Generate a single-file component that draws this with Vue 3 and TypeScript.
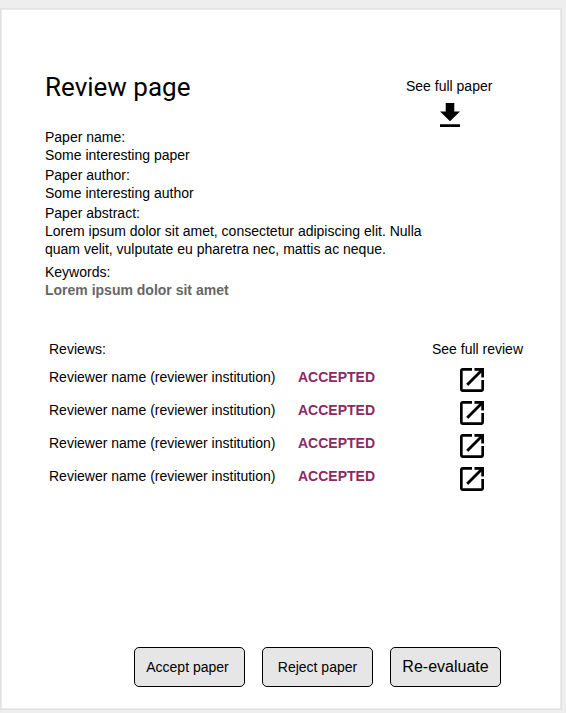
<script setup lang="ts">
interface Field {
  label: string
  value: string
  kind?: string
}

interface Review {
  id: number
  reviewer: string
  verdict: string
}

const fields: Field[] = [
  { label: 'Paper name:', value: 'Some interesting paper' },
  { label: 'Paper author:', value: 'Some interesting author' },
  {
    label: 'Paper abstract:',
    value:
      'Lorem ipsum dolor sit amet, consectetur adipiscing elit. Nulla quam velit, vulputate eu pharetra nec, mattis ac neque.',
  },
  { label: 'Keywords:', value: 'Lorem ipsum dolor sit amet', kind: 'keywords' },
]

const reviews: Review[] = [1, 2, 3, 4].map((id) => ({
  id,
  reviewer: 'Reviewer name (reviewer institution)',
  verdict: 'ACCEPTED',
}))
</script>

<template>
  <div class="page">
    <main class="card">
      <header class="top">
        <h1>Review page</h1>
        <div class="download">
          <span>See full paper</span>
          <svg width="20" height="24" viewBox="5 3 14 17" preserveAspectRatio="none" aria-hidden="true">
            <path d="M19 9h-4V3H9v6H5l7 7 7-7zM5 18v2h14v-2H5z" />
          </svg>
        </div>
      </header>

      <dl class="fields">
        <div v-for="field in fields" :key="field.label" class="field" :class="field.kind">
          <dt>{{ field.label }}</dt>
          <dd>{{ field.value }}</dd>
        </div>
      </dl>

      <section class="reviews">
        <div class="reviews-head">
          <span>Reviews:</span>
          <span class="see-review">See full review</span>
        </div>
        <div v-for="review in reviews" :key="review.id" class="review">
          <span>{{ review.reviewer }}</span>
          <strong>{{ review.verdict }}</strong>
          <svg class="open" width="24" height="24" viewBox="3 3 18 18" aria-hidden="true">
            <path d="M19 19H5V5h7V3H5c-1.11 0-2 .9-2 2v14c0 1.1.89 2 2 2h14c1.1 0 2-.9 2-2v-7h-2v7z" />
            <path class="arrow" d="M14 3v2h3.59l-9.83 9.83 1.41 1.41L19 6.41V10h2V3h-7z" />
          </svg>
        </div>
      </section>

      <footer class="actions">
        <button type="button">Accept paper</button>
        <button type="button">Reject paper</button>
        <button type="button" class="large">Re-evaluate</button>
      </footer>
    </main>
  </div>
</template>

<style>
body {
  background: #eeeeee;
}
</style>

<style scoped>
.page {
  box-sizing: border-box;
  height: 713px;
  padding: 9px 5px 4px 1px;
  font: 14px/18px 'Liberation Sans', Arial, sans-serif;
  color: #000;
}

.card {
  box-sizing: border-box;
  display: flex;
  flex-direction: column;
  height: 700px;
  padding: 0 0 21px 43px;
  border: 1px solid #e9e9e9;
  background: #fff;
  box-shadow: 0 0 0 1px #e2e2e2;
}

.top {
  display: flex;
  height: 118px;
}

h1 {
  width: 361px;
  margin: 62px 0 0;
  font: 400 26px/30px Roboto, sans-serif;
}

.download {
  display: flex;
  flex-direction: column;
  gap: 8px;
  height: 50px;
  margin-top: 67px;
}

.download svg {
  margin-left: 34px;
}

svg {
  display: block;
  flex: none;
}

.arrow {
  stroke: #000;
  stroke-width: 0.2;
}

.fields {
  width: 390px;
  margin: 0;
}

.field {
  margin-bottom: 2px;
}

.field.keywords {
  margin: 5px 0 0;
}

dd {
  margin: 0;
}

.keywords dd {
  font-weight: 700;
  color: #666;
}

.reviews {
  margin: 41px 0 0 4px;
}

.reviews-head {
  display: flex;
  height: 28px;
}

.see-review {
  margin-left: auto;
  margin-right: 37px;
}

.review {
  display: grid;
  grid-template-columns: 249px 162px 24px;
  height: 33px;
}

.review strong {
  color: #8b2a63;
}

.actions {
  display: flex;
  gap: 17px;
  margin: auto 0 0 89px;
}

button {
  box-sizing: border-box;
  width: 111px;
  height: 40px;
  padding: 0;
  border: 1px solid #000;
  border-radius: 5px;
  background: #e6e6e6;
  color: #000;
  font: inherit;
}

button:first-child {
  padding-right: 4px;
}

button.large {
  font-size: 16px;
}
</style>
